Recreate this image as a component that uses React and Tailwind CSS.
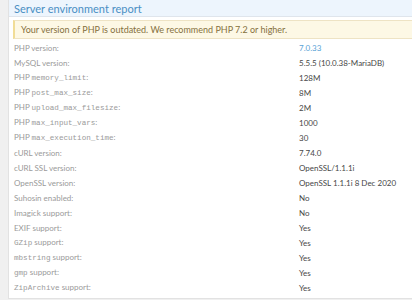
const rows = [
  [["PHP version:"], "7.0.33", true],
  [["MySQL version:"], "5.5.5 (10.0.38-MariaDB)"],
  [["PHP ", { m: "memory_limit" }, ":"], "128M"],
  [["PHP ", { m: "post_max_size" }, ":"], "8M"],
  [["PHP ", { m: "upload_max_filesize" }, ":"], "2M"],
  [["PHP ", { m: "max_input_vars" }, ":"], "1000"],
  [["PHP ", { m: "max_execution_time" }, ":"], "30"],
  [["cURL version:"], "7.74.0"],
  [["cURL SSL version:"], "OpenSSL/1.1.1i"],
  [["OpenSSL version:"], "OpenSSL 1.1.1i 8 Dec 2020"],
  [["Suhosin enabled:"], "No"],
  [["Imagick support:"], "No"],
  [["EXIF support:"], "Yes"],
  [[{ m: "GZip" }, " support:"], "Yes"],
  [[{ m: "mbstring" }, " support:"], "Yes"],
  [[{ m: "gmp" }, " support:"], "Yes"],
  [[{ m: "ZipArchive" }, " support:"], "Yes"],
];

export default function App() {
  return (
    <div className="h-[300px] overflow-hidden bg-[#f0f0f0] pl-2 font-['Lato',sans-serif]">
      <div className="border-l border-b border-[#e2e2e2] bg-white pb-[3px]">
        <div className="flex h-[17px] items-center border-b border-[#dfe5ec] bg-[#edf5fd] px-[5px] text-[11px] leading-none text-[#4a8fc4]">
          Server environment report
        </div>
        <div className="ml-1 mt-[3px] flex h-[19px] items-center whitespace-nowrap border-y border-l-2 border-y-[#eee3c4] border-l-[#f1dd97] bg-[#fdf8e5] pl-[6px] text-[9px] text-[#85703d]">
          Your version of PHP is outdated. We recommend PHP 7.2 or higher.
        </div>
        <div className="mt-[1px] px-[5px]">
          {rows.map(([label, value, link], i) => (
            <div key={i} className="flex h-[15px] items-center whitespace-nowrap text-[8px]">
              <div className="w-[285px] shrink-0 text-[#9a9a9a]">
                {label.map((p, j) =>
                  typeof p === "string" ? (
                    <span key={j}>{p}</span>
                  ) : (
                    <span key={j} className="font-['Liberation_Mono',monospace] text-[7.6px]">
                      {p.m}
                    </span>
                  )
                )}
              </div>
              <div className={link ? "text-[#5aa3d6]" : "text-[#474747]"}>{value}</div>
            </div>
          ))}
        </div>
      </div>
    </div>
  );
}
